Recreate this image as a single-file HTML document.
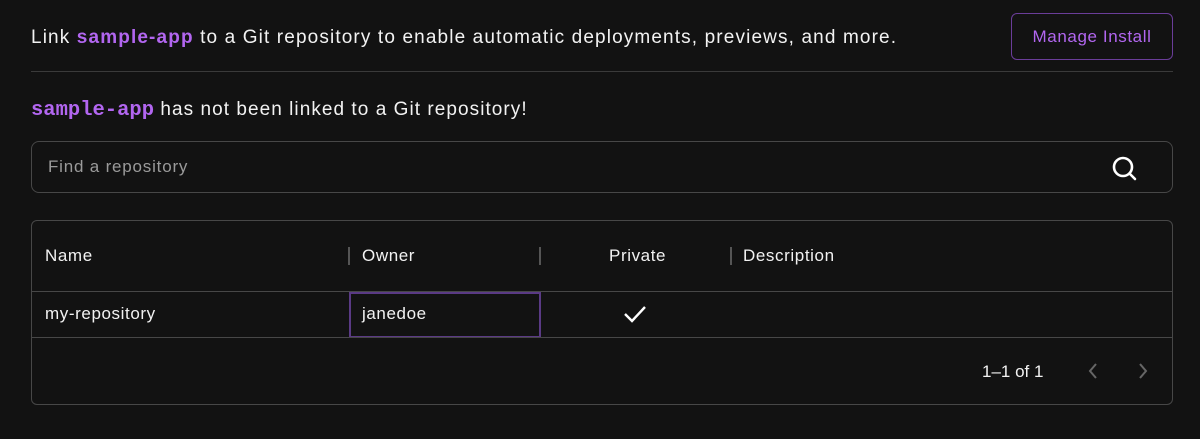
<!DOCTYPE html>
<html><head><style>
*{box-sizing:border-box;margin:0;padding:0}
body{width:1200px;height:439px;background:#121212;color:#f2f2f2;font-family:"Liberation Sans",sans-serif;position:relative;overflow:hidden}
.a{position:absolute}
.p{color:#b266f0;font-weight:bold}
.mono{font-family:"Liberation Mono",monospace;font-weight:bold;color:#b266f0;letter-spacing:0}
.sep{position:absolute;width:2px;height:18px;background:#555;top:26px}
.th{position:absolute;top:25px;font-size:17px;letter-spacing:0.6px}
</style></head><body>
<div class="a" style="left:31px;top:27px;font-size:19px;letter-spacing:1.13px;white-space:nowrap">Link <span class="p">sample-app</span> to a Git repository to enable automatic deployments, previews, and more.</div>
<div class="a" style="left:1011px;top:13px;width:162px;height:47px;border:1px solid #6a3d99;border-radius:6px;color:#b266f0;font-size:17px;letter-spacing:0.6px;display:flex;align-items:center;justify-content:center">Manage Install</div>
<div class="a" style="left:31px;top:71px;width:1142px;height:1px;background:#3a3a3a"></div>
<div class="a" style="left:31px;top:99px;font-size:19px;letter-spacing:1.05px;white-space:nowrap"><span class="mono" style="font-size:20.5px;letter-spacing:0">sample-app</span> has not been linked to a Git repository!</div>
<div class="a" style="left:31px;top:141px;width:1142px;height:52px;border:1px solid #474747;border-radius:8px"></div>
<div class="a" style="left:48px;top:157px;font-size:17px;letter-spacing:0.8px;color:#9a9a9a">Find a repository</div>
<svg class="a" style="left:1110px;top:154px" width="30" height="30" viewBox="0 0 30 30"><circle cx="13" cy="13" r="9" fill="none" stroke="#fff" stroke-width="2.6"/><path d="M19.5 19.5L25 25" stroke="#fff" stroke-width="2.6" stroke-linecap="round"/></svg>
<div class="a" style="left:31px;top:220px;width:1142px;height:185px;border:1px solid #474747;border-radius:6px">
 <div class="th" style="left:13px">Name</div>
 <div class="sep" style="left:316px"></div><div class="th" style="left:330px">Owner</div>
 <div class="sep" style="left:507px"></div><div class="th" style="left:577px">Private</div>
 <div class="sep" style="left:698px"></div><div class="th" style="left:711px">Description</div>
 <div class="a" style="left:0;top:70px;width:1140px;height:1px;background:#474747"></div>
 <div class="a" style="left:13px;top:83px;font-size:17px;letter-spacing:0.6px">my-repository</div>
 <div class="a" style="left:317px;top:71px;width:192px;height:46px;border:2px solid #5a3a85"></div>
 <div class="a" style="left:330px;top:83px;font-size:17px;letter-spacing:0.6px">janedoe</div>
 <svg class="a" style="left:591px;top:82px" width="24" height="22" viewBox="0 0 24 22"><path d="M2 11L9 18L22 4" fill="none" stroke="#fff" stroke-width="2.4"/></svg>
 <div class="a" style="left:0;top:116px;width:1140px;height:1px;background:#474747"></div>
 <div class="a" style="left:950px;top:141px;font-size:17px">1–1 of 1</div>
 <svg class="a" style="left:1054px;top:141px" width="14" height="18" viewBox="0 0 14 18"><path d="M10 2L4 9L10 16" fill="none" stroke="#666" stroke-width="2"/></svg>
 <svg class="a" style="left:1104px;top:141px" width="14" height="18" viewBox="0 0 14 18"><path d="M4 2L10 9L4 16" fill="none" stroke="#666" stroke-width="2"/></svg>
</div>
</body></html>
